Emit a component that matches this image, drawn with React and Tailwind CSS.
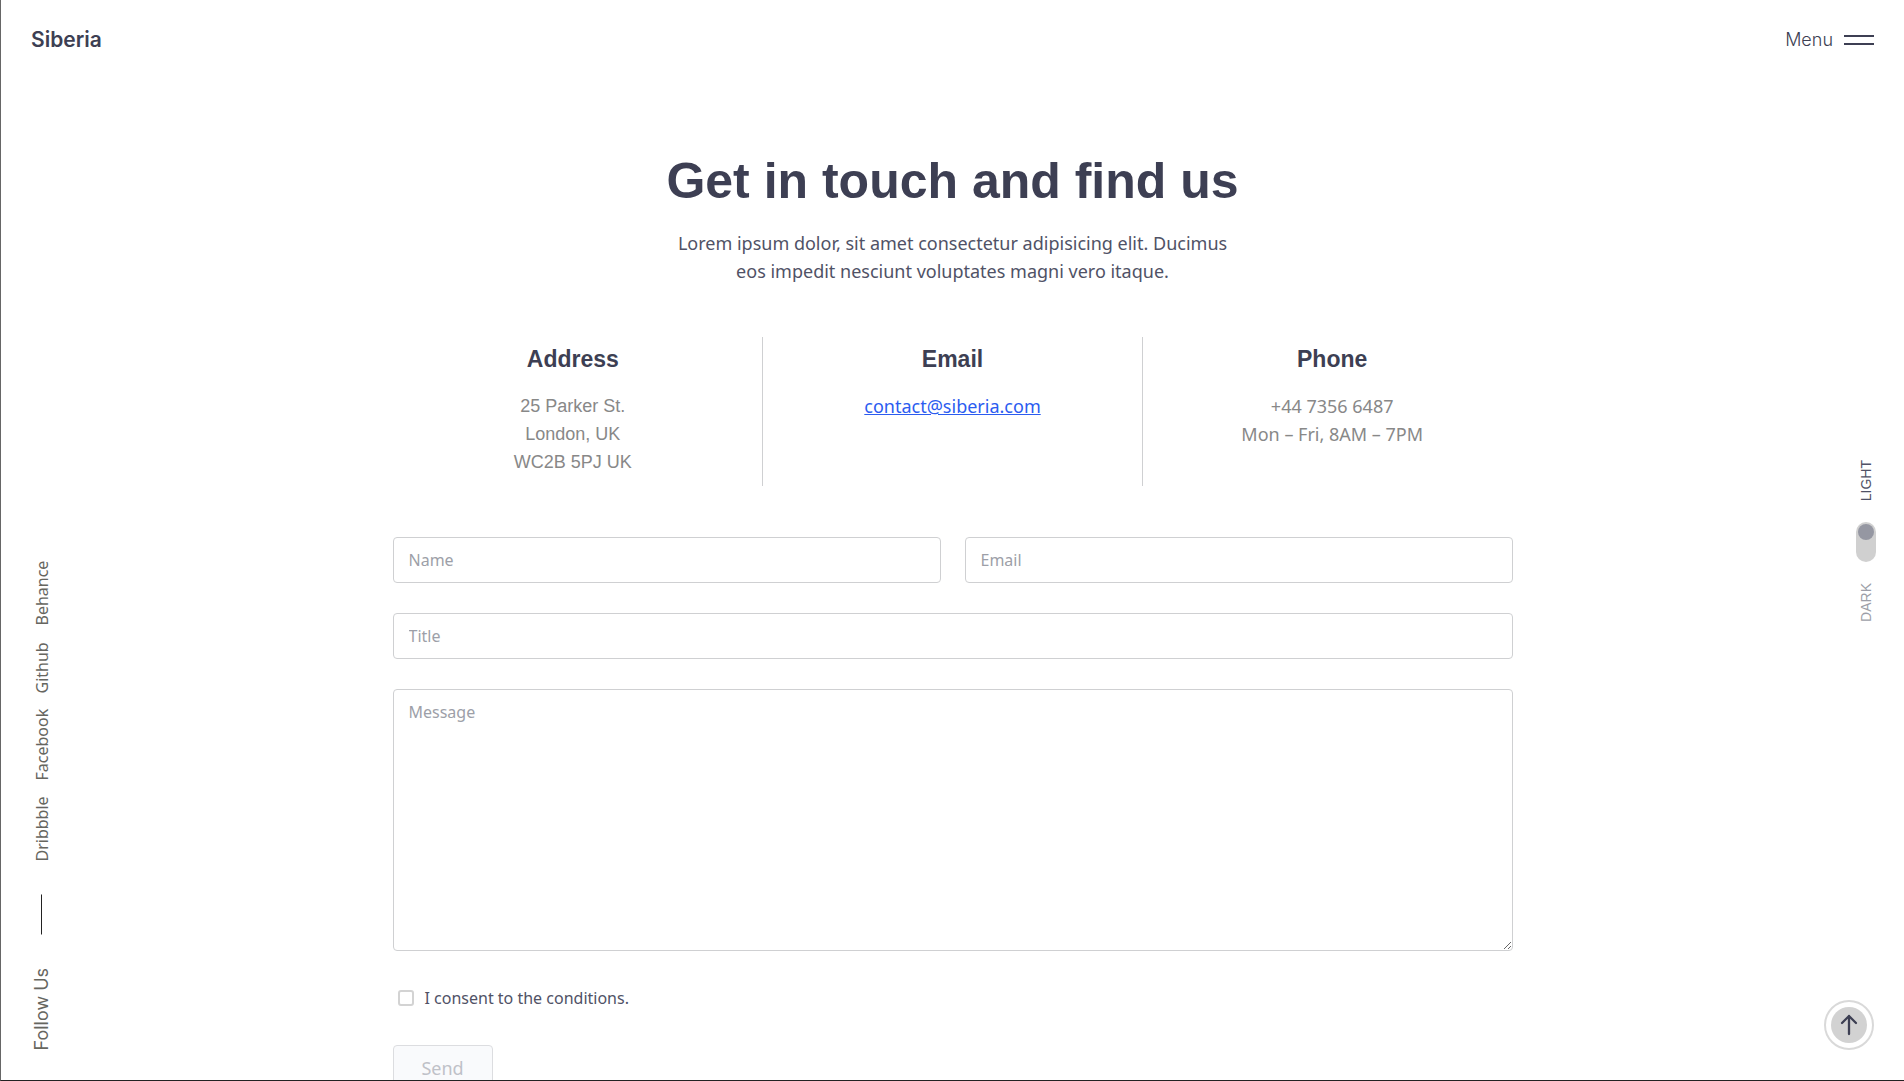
import { useState } from "react";

const socials = ["Dribbble", "Facebook", "Github", "Behance"];

const field =
  "block w-full rounded-sm border border-[#cfd0d2] bg-white px-[15px] text-base text-[#3d3f53] placeholder:text-[#9d9fa8] outline-none focus:border-[#3d3f53]";

const Header = () => (
  <header className="flex h-20 shrink-0 items-center justify-between px-[30px]">
    <a href="#home" className="font-['Inter',sans-serif] text-[21px] font-semibold leading-7">
      Siberia
    </a>
    <button type="button" className="flex items-center gap-[11px] font-['Inter',sans-serif] text-lg font-light">
      Menu
      <span className="flex w-[30px] flex-col gap-[6px]">
        <span className="h-[2px] bg-[#3d3f53]" />
        <span className="h-[2px] bg-[#3d3f53]" />
      </span>
    </button>
  </header>
);

// Vertical social links, read from bottom to top
const FollowRail = () => (
  <aside className="flex w-[84px] shrink-0 flex-col items-center justify-end pr-[2px] pb-[30px]">
    <div className="flex rotate-180 items-center gap-[33px] text-[#66665f] [writing-mode:vertical-rl]">
      <p className="font-['Inter',sans-serif] text-lg leading-6">Follow Us</p>
      <span className="h-10 w-px bg-[#222222]" />
      <ul className="flex gap-4 text-base leading-6">
        {socials.map((name) => (
          <li key={name}>
            <a href={`#${name.toLowerCase()}`}>{name}</a>
          </li>
        ))}
      </ul>
    </div>
  </aside>
);

const ThemeRail = () => {
  const [dark, setDark] = useState(false);

  return (
    <aside className="flex w-[84px] shrink-0 flex-col items-center justify-center gap-[21px] pb-[78px] pl-2 font-['Liberation_Sans',sans-serif] text-sm leading-5">
      <span className="rotate-180 text-[#505266] [writing-mode:vertical-rl]">LIGHT</span>
      <label className="flex h-10 w-5 cursor-pointer flex-col items-center rounded-full bg-[#d0d0d0] p-[2px]">
        <input
          type="checkbox"
          aria-label="Dark mode"
          className="peer sr-only"
          checked={dark}
          onChange={(e) => setDark(e.target.checked)}
        />
        <span className="size-4 rounded-full bg-[#9597a2] peer-checked:mt-auto" />
      </label>
      <span className="rotate-180 text-[#9d9fa8] [writing-mode:vertical-rl]">DARK</span>
    </aside>
  );
};

const InfoCard = ({ title, children }) => (
  <div className="flex-1 border-r border-[#cfd0d2] pt-[7px] pb-[10px] text-center last:border-r-0">
    <h2 className="font-['Liberation_Sans',sans-serif] text-[23px] font-bold leading-[30px]">{title}</h2>
    <div className="mt-[18px] text-lg leading-7 text-[#888888]">{children}</div>
  </div>
);

const ContactForm = () => (
  <form className="mx-[9px] mt-[51px]" onSubmit={(e) => e.preventDefault()}>
    <div className="flex gap-6">
      <input type="text" aria-label="Name" placeholder="Name" className={`${field} h-[46px]`} />
      <input type="email" aria-label="Email" placeholder="Email" className={`${field} h-[46px]`} />
    </div>
    <input type="text" aria-label="Title" placeholder="Title" className={`${field} mt-[30px] h-[46px]`} />
    <textarea
      aria-label="Message"
      placeholder="Message"
      className={`${field} mt-[30px] h-[262px] resize py-[10px] leading-6`}
    />
    <div className="mt-[35px] flex items-center gap-[11px] pl-[5px]">
      <input
        id="consent"
        type="checkbox"
        className="size-4 appearance-none rounded-[3px] border-2 border-[#d3d3d3] checked:bg-[#3d3f53]"
      />
      <label htmlFor="consent" className="text-base leading-6 text-[#505266]">
        I consent to the conditions.
      </label>
    </div>
    <button
      type="submit"
      disabled
      className="mt-[35px] h-[46px] w-[100px] rounded-sm border border-[#dcdde0] bg-[#f9fafc] text-lg text-[#bfc1c8]"
    >
      Send
    </button>
  </form>
);

const App = () => {
  return (
    <div className="flex h-screen flex-col overflow-hidden border-b border-l border-b-[#222222] border-l-[#666666] bg-white font-['Noto_Sans',sans-serif] text-[#3d3f53]">
      <Header />

      <div className="flex min-h-0 flex-1">
        <FollowRail />

        <main className="min-w-0 flex-1 overflow-hidden">
          <div className="mx-auto max-w-[1138px] pt-[71px]">
            <h1 className="text-center font-['Liberation_Sans',sans-serif] text-[50px] font-bold leading-[60px]">
              Get in touch and find us
            </h1>
            <p className="mx-auto mt-[18px] max-w-[600px] text-center text-lg leading-7 text-[#505266]">
              Lorem ipsum dolor, sit amet consectetur adipisicing elit. Ducimus
              <br />
              eos impedit nesciunt voluptates magni vero itaque.
            </p>

            <section className="mt-[52px] flex">
              <InfoCard title="Address">
                <p className="font-['Liberation_Sans',sans-serif]">
                  25 Parker St.
                  <br />
                  London, UK
                  <br />
                  WC2B 5PJ UK
                </p>
              </InfoCard>
              <InfoCard title="Email">
                <a href="mailto:contact@siberia.com" className="text-[#2b5cf0] underline">
                  contact@siberia.com
                </a>
              </InfoCard>
              <InfoCard title="Phone">
                <p>+44 7356 6487</p>
                <p>Mon – Fri, 8AM – 7PM</p>
              </InfoCard>
            </section>

            <ContactForm />
          </div>
        </main>

        <ThemeRail />
      </div>

      {/* Back to top */}
      <button
        type="button"
        aria-label="Back to top"
        className="fixed right-[30px] bottom-[31px] flex size-[50px] items-center justify-center rounded-full border-2 border-[#d9d9d9] bg-white"
      >
        <span className="flex size-9 items-center justify-center rounded-full bg-[#d2d2d2]">
          <svg
            viewBox="0 0 20 22"
            className="h-[22px] w-5"
            fill="none"
            stroke="#3d3f53"
            strokeWidth="2.3"
            strokeLinecap="round"
            strokeLinejoin="round"
          >
            <path d="M10 20V2M3 9l7-7 7 7" />
          </svg>
        </span>
      </button>
    </div>
  );
};

export default App;
